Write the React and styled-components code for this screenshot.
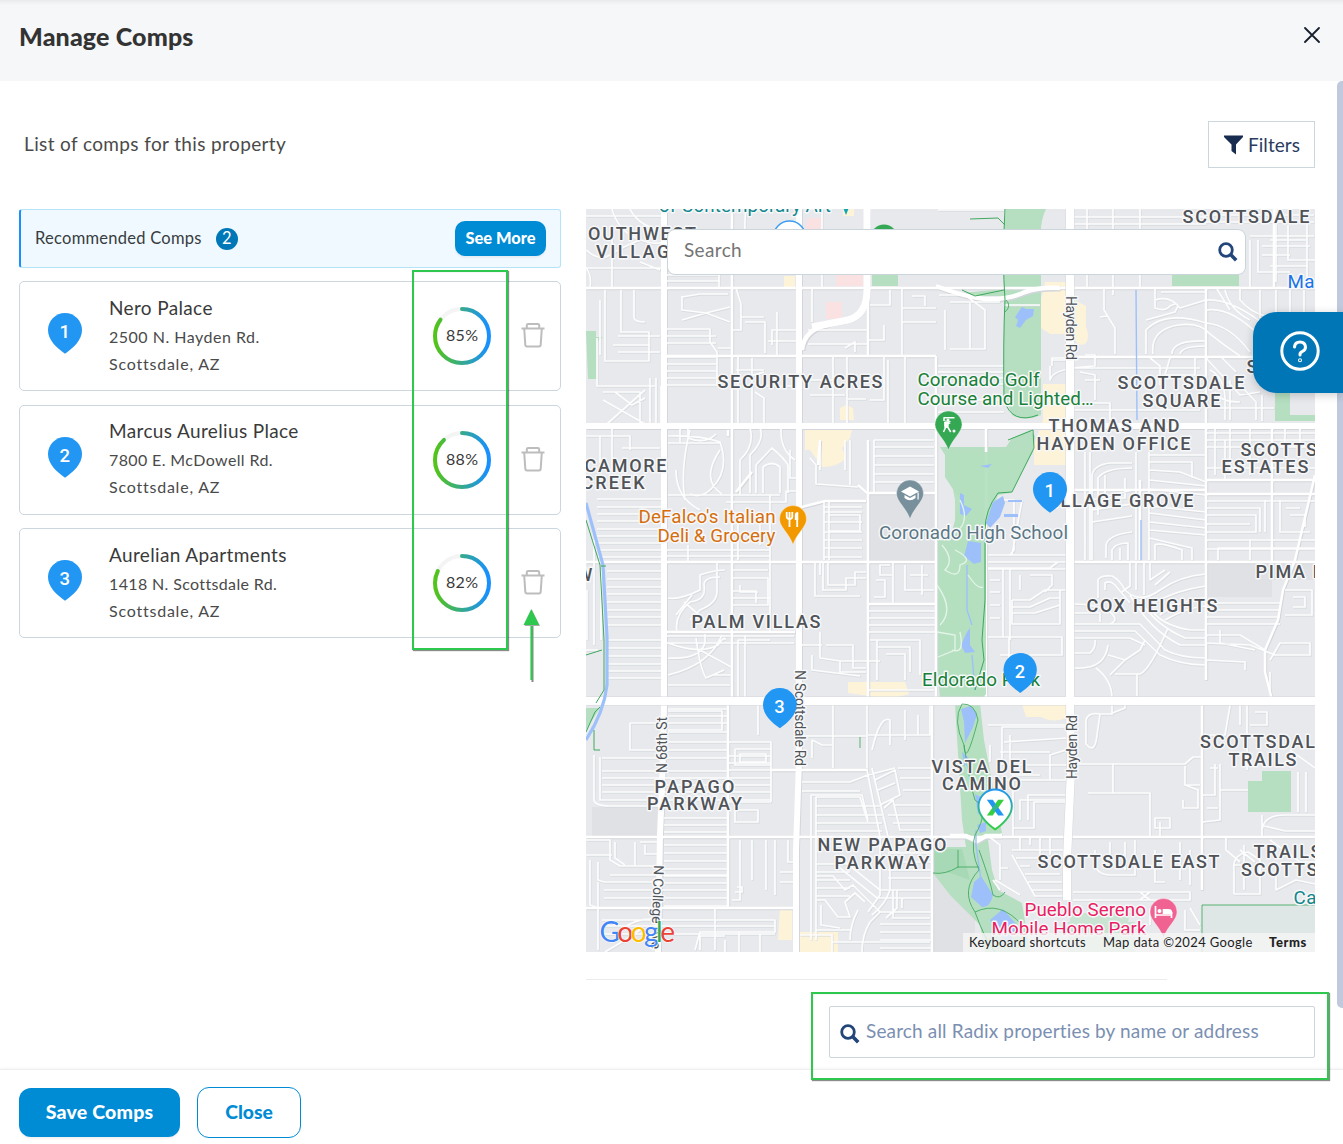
import React from "react";
import styled, { createGlobalStyle } from "styled-components";

const GlobalStyle = createGlobalStyle`
  * { box-sizing: border-box; }
  body { margin: 0; background: #fff; font-family: Lato, "Open Sans", sans-serif; color: #333; }
  button, input { font-family: inherit; }
  svg { display: block; flex: none; }
`;

const Page = styled.div`
  position: relative;
  display: flex;
  flex-direction: column;
  width: 1343px;
  height: 1144px;
  overflow: hidden;
`;
const Header = styled.header`
  display: flex;
  justify-content: space-between;
  height: 81px;
  padding: 22px 23px 0 19px;
  background: linear-gradient(#e8eaec, #f5f7f9 5px);
`;
const Title = styled.h1`
  margin: 0;
  font-size: 25px;
  line-height: 29px;
  font-weight: 900;
  letter-spacing: 0.15px;
  color: #333;
`;
const Body = styled.main`
  height: 988px;
  padding: 40px 28px 0 19px;
`;
const Toolbar = styled.div`
  display: flex;
  justify-content: space-between;
  height: 47px;
  padding-left: 5px;
`;
const Intro = styled.p`
  margin: 0;
  font-size: 19px;
  line-height: 45px;
  color: #4a4a4a;
  letter-spacing: 0.37px;
`;
const FilterButton = styled.button`
  display: flex;
  align-items: center;
  gap: 5px;
  width: 107px;
  height: 47px;
  padding: 0 0 0 15px;
  border: 1px solid #ccd6dd;
  background: #fff;
  color: #2b3c61;
  font-size: 19px;
  letter-spacing: 0.05px;
  white-space: nowrap;
`;
const Columns = styled.div`
  display: flex;
  gap: 25px;
  margin-top: 41px;
`;
const CompList = styled.section`
  display: flex;
  flex-direction: column;
  width: 542px;
`;
const Banner = styled.div`
  display: flex;
  align-items: center;
  height: 59px;
  margin-bottom: 13px;
  padding: 0 14px 0 14px;
  border: 1px solid #b5e3f8;
  border-left: 2px solid #1890ff;
  border-radius: 3px;
  background: #f0f9ff;
  color: #383d40;
  font-size: 16.5px;
  letter-spacing: 0.26px;
`;
const BannerText = styled.span`
  padding-bottom: 2px;
`;
const Count = styled.span`
  width: 22px;
  height: 22px;
  margin: 0 auto 0 14px;
  border-radius: 50%;
  background: #0077b6;
  color: #fff;
  font-size: 16.5px;
  line-height: 21px;
  text-align: center;
  letter-spacing: 0;
`;
const Action = styled.button`
  width: ${(p) => p.$w}px;
  height: ${(p) => p.$h}px;
  padding: 0 0 3px;
  border: ${(p) => (p.$ghost ? "1px solid #008bd5" : "0")};
  border-radius: ${(p) => p.$r || 12}px;
  background: ${(p) => (p.$ghost ? "#fff" : "#008bd5")};
  color: ${(p) => (p.$ghost ? "#008bd5" : "#fff")};
  box-shadow: ${(p) => (p.$ghost ? "none" : "0 2px 2px rgba(0,0,0,.05)")};
  font-size: ${(p) => p.$fs}px;
  font-weight: 900;
  letter-spacing: ${(p) => p.$ls || 0}px;
`;
const Card = styled.article`
  display: flex;
  align-items: center;
  height: 110px;
  margin-bottom: 13.6px;
  padding-left: 27.5px;
  border: 1px solid #ccd6de;
  border-radius: 5px;
`;
const PinSlot = styled.div`
  width: 61.5px;
  margin-top: -5px;
`;
const Details = styled.div`
  width: 324px;
  padding-bottom: 3px;
`;
const Name = styled.div`
  font-size: 19px;
  line-height: 30px;
  color: #3a3a3a;
  letter-spacing: 0.36px;
`;
const Address = styled.div`
  font-size: 16px;
  line-height: 27px;
  color: #4a4a4a;
  letter-spacing: ${(p) => p.$ls}px;
`;
const TrashSlot = styled.div`
  margin: -2px 0 0 29.5px;
`;
const MapColumn = styled.section`
  width: 729px;
`;
const MapFrame = styled.div`
  position: relative;
  height: 743px;
  overflow: hidden;
`;
const MapSearch = styled.div`
  position: absolute;
  top: 20px;
  left: 81px;
  display: flex;
  align-items: center;
  justify-content: space-between;
  width: 579px;
  height: 46px;
  padding: 0 7px 1px 16px;
  border: 1px solid #cbd5dc;
  border-radius: 8px;
  background: #fff;
  color: #757575;
  font-size: 19px;
  line-height: 44px;
  letter-spacing: 0.35px;
`;
const Attribution = styled.div`
  position: absolute;
  right: 0;
  bottom: 0;
  display: flex;
  align-items: center;
  width: 352px;
  height: 19px;
  padding: 0 0 2px 6px;
  background: rgba(245, 245, 245, 0.82);
  color: #222;
  font-size: 13px;
  white-space: nowrap;
`;
const Credit = styled.span`
  width: ${(p) => p.$w}px;
  letter-spacing: ${(p) => p.$ls}px;
  font-weight: ${(p) => (p.$bold ? 900 : 400)};
`;
const Rule = styled.div`
  width: 581px;
  height: 1px;
  margin-top: 27px;
  background: #ececec;
`;
const PropertySearch = styled.div`
  display: flex;
  align-items: center;
  gap: 6px;
  width: 486px;
  height: 52px;
  margin: 26px 0 0 auto;
  padding: 0 0 0 10px;
  border: 1px solid #cbd5dc;
  border-radius: 2px;
  color: #7b8fb2;
  font-size: 19px;
  letter-spacing: 0.15px;
  white-space: nowrap;
`;
const Placeholder = styled.span`
  padding-bottom: 3px;
`;
const IconDrop = styled.span`
  padding-top: 4px;
`;
const Footer = styled.footer`
  display: flex;
  align-items: center;
  gap: 17px;
  height: 75px;
  padding: 11px 0 0 19px;
  background: #fff;
  border-top: 1px solid #eee;
  box-shadow: 0 -1px 3px rgba(0, 0, 0, 0.04);
`;
const ScrollThumb = styled.div`
  position: absolute;
  right: 0;
  top: 81px;
  width: 6px;
  height: 927px;
  border-radius: 5px 0 0 5px;
  background: #c0c9dd;
`;
const HelpTab = styled.button`
  position: absolute;
  right: 0;
  top: 312px;
  width: 90px;
  height: 81px;
  padding: 0 0 3px 26.5px;
  border: 0;
  border-radius: 24px 0 0 24px;
  background: #0076b6;
  box-shadow: 0 2px 10px rgba(0, 0, 0, 0.2);
`;
const Highlight = styled.div`
  position: absolute;
  left: ${(p) => p.$x}px;
  top: ${(p) => p.$y}px;
  width: ${(p) => p.$w}px;
  height: ${(p) => p.$h}px;
  border: 2px solid #2dc84d;
  box-shadow: 1px 1px 1px rgba(0, 0, 0, 0.45), inset 1px 1px 0 rgba(0, 0, 0, 0.03);
`;
const Pointer = styled.svg`
  position: absolute;
  left: 520px;
  top: 607px;
`;

const PIN = "M17 0C26.4 0 34 7.6 34 17C34 27.5 25 35 17 40.7C9 35 0 27.5 0 17C0 7.6 7.6 0 17 0Z";

const PinShape = ({ n, x = 0, y = 0, scale = 1 }) => (
  <g transform={`translate(${x} ${y}) scale(${scale})`}>
    <path d={PIN} fill="#2196f3" />
    <text x="16.7" y="25.2" textAnchor="middle" fontFamily="Roboto, sans-serif" fontWeight="500" fontSize="18.5" fill="#fff">{n}</text>
  </g>
);

const ring = 2 * Math.PI * 27;
const Score = ({ value }) => (
  <svg width="58" height="58" viewBox="0 0 58 58">
    <defs>
      <linearGradient id={`score${value}`} gradientUnits="userSpaceOnUse" x1="0" y1="0" x2="0" y2="58">
        <stop offset="0.05" stopColor="#52c41a" />
        <stop offset="0.95" stopColor="#1890ff" />
      </linearGradient>
    </defs>
    <circle cx="29" cy="29" r="27" fill="none" stroke="#f4f4f4" strokeWidth="4" />
    <circle cx="29" cy="29" r="27" fill="none" stroke={`url(#score${value})`} strokeWidth="4" strokeLinecap="round"
      strokeDasharray={`${(ring * value) / 100} ${ring}`} transform="rotate(-90 29 29)" />
    <text x="29" y="34" textAnchor="middle" fontFamily="Lato, sans-serif" fontSize="16" fill="#3a3a3a" textLength="32">{value}%</text>
  </svg>
);

const Trash = () => (
  <svg width="24" height="26" viewBox="0 0 24 26" fill="none" stroke="#bdbdbd" strokeWidth="2" strokeLinejoin="round">
    <path d="M.5 6.5H23.5M5.8 6V3.3Q5.8 2 7.2 2H16.8Q18.2 2 18.2 3.3V6M3.2 6.5L4.3 22.6Q4.4 24.4 6 24.4H18Q19.6 24.4 19.7 22.6L20.8 6.5" />
  </svg>
);

const SearchIcon = () => (
  <svg width="20" height="20" viewBox="0 0 20 20" fill="none" stroke="#22457a">
    <circle cx="8" cy="8" r="6.3" strokeWidth="2.8" />
    <path d="M12.6 12.6L18.2 18.2" strokeWidth="3.6" />
  </svg>
);

const h = (a, b, ...ys) => ys.map((y) => `M${a} ${y}H${b}`).join("");
const v = (a, b, ...xs) => xs.map((x) => `M${x} ${a}V${b}`).join("");

const minor =
  h(586, 664, 216, 268) + "M586 250Q600 262 610 255T640 240M612 209Q618 230 636 238T664 242M630 209Q640 228 664 230M586 268Q592 275 590 288M612 232V288M640 262L660 270" +
  h(666, 720, 275, 281) + "M719 275V288M732 209V288M746 209Q742 240 752 270" +
  "M605 290V361H649V332H621V290M613 345H650M600 300V355M634 290V318Q635 322 645 322M597 338V386H655M618 336H660M618 352H660M650 378V424M656 378V424M661 386V424" +
  "M603 400L645 424M645 390L607 424M603 392H640V424M615 392L632 405L645 398" +
  h(666, 716, 336, 343, 357, 364, 371, 378, 385) + "M666 329H710V342L717 352V386M718 348H731M682 296V310L706 313L730 307M682 320L706 313L730 322M682 297L700 294H728" +
  "M736 288L741 304V330H732M741 317H764M736 370H764M736 380L764 372M745 322H765V353M738 356V425M752 358V425M766 386H799M777 312V356M768 341H796M772 345V330H796M755 392L764 398V425" +
  h(808, 868, 330, 344) + "M833 356V426M847 356V426M812 288V322M822 209V288M890 290V305H870M902 288V356M884 325V340H869M845 348L855 342V352M902 308H936M902 322H936M912 296H925V306M884 356V400H870M810 380H832M810 395H845M848 399H866M888 360V425M905 356V425" +
  h(938, 1004, 210, 366, 372, 378, 384, 400, 412) + "M939 295H965L985 310V349H950M945 310V350M970 303V349M950 302H1000M1004 305H1040" +
  h(1052, 1068, 360) + "M1052 366V358H1070M1050 366V380Q1052 368 1095 366V355H1085" +
  h(1074, 1206, 217, 224, 230) + v(209, 288, 1087, 1113, 1140) +
  h(1206, 1314, 215, 222) + "M1250 240V288M1258 240V272H1290M1250 236H1314M1262 255H1290M1276 209V282M1307 220V282M1262 246H1310M1288 225V260H1315M1270 240H1306M1270 266H1308" +
  "M1104 288V310L1115 328V354M1108 316L1100 317M1113 290V295M1155 288V308Q1165 312 1170 306Q1182 300 1175 312L1146 320M1155 300Q1170 295 1180 308L1206 300M1161 292H1170Q1190 292 1206 292M1146 354V330Q1165 310 1206 323Q1230 325 1250 352M1153 354Q1150 330 1178 325Q1200 322 1210 334Q1225 346 1240 356M1172 354Q1172 340 1206 341M1180 354Q1182 346 1206 346M1206 310Q1230 306 1260 336M1206 300Q1230 298 1265 325M1225 290Q1230 310 1250 320M1240 289V300Q1250 312 1265 316M1217 289L1230 310M1260 290V318M1276 290V360M1290 290V312M1304 290V312M1206 358L1240 395L1260 392M1220 356L1236 372M1210 370Q1225 378 1225 400V420M1215 392Q1220 402 1240 402M1150 358L1160 366V385M1170 358L1165 375H1195V357" +
  h(1074, 1200, 357, 368, 410) + "M1080 372L1095 375V400M1085 380H1100M1075 403H1110V420M1218 408H1274M1230 380V420M1240 385L1256 402V420M1262 395V421" +
  v(428, 475, 1215, 1230, 1250) + h(1206, 1315, 433, 440, 447, 468) + "M1285 428V455M1300 428V455M1225 480V440H1206" +
  "M586 436H630V450M600 436V463M612 428V470M622 448H660M668 436Q700 435 720 442Q730 470 712 488Q702 499 690 494M668 443H720M680 428V443M690 430Q680 470 685 500M676 470Q676 498 700 510M720 450Q700 480 722 494M750 428Q755 446 740 460V495M760 428Q765 440 750 455V493M756 493V465L772 448Q784 458 788 465V493M763 493V467Q772 460 780 467V493M781 428Q780 450 795 460M688 428V438Q705 445 716 434M800 478H790V450M810 458L816 465V484L858 487M820 470V440M845 440V470M850 485V440M874 440H934M874 440V492" +
  h(874, 934, 447, 456, 465, 474, 482) + h(668, 780, 495) + "M726 502H786V491H798" +
  h(597, 662, 499, 507, 514, 521, 529, 536, 543, 550, 557) +
  h(666, 770, 550, 556) + "M688 545V561M732 504V560M738 512V560M760 512V545M770 495V562" +
  h(824, 862, 507, 512, 522, 532, 540, 548, 557) + v(501, 560, 824, 829) + "M829 522V515H860V531H829" +
  h(607, 662, 571, 579, 587, 594, 602, 610, 617, 625, 640, 648, 656, 664, 671, 678) +
  "M587 590V640M594 540V645M586 650H598M601 570V640M668 598Q680 600 700 590V575Q715 570 725 570M677 632Q674 615 690 602Q707 600 704 585Q704 577 720 577M684 602L705 620M692 595L676 615M717 563V590Q718 603 700 610L690 620M732 563V632M732 570H768M732 578H768V605H732M732 591H756V603M732 598H770M770 563V632M740 585V592H758" +
  "M823 563V590H846V578H866M828 563V585H855V572H866M815 563V596H860M820 563V575" +
  "M876 580H885V597H874M893 563V604H868M905 565V590H934M922 565V595M890 565H880V575H892M910 575H928" +
  h(868, 935, 604, 611, 618, 625, 632) + h(666, 794, 636, 643) +
  "M668 643Q700 655 718 645Q725 635 725 640M668 658Q700 660 705 643V634M668 675Q710 665 722 635M696 638Q700 668 706 678L724 670M700 650L731 667M668 685H730M712 675H731M738 640H770M738 640V700M745 635V700" +
  "M820 632V658L840 661V672H866M826 645H853V668H866M840 661H880M802 645H822M812 655V670L860 676M870 640H920V675M878 647H910V672M886 654H905V680M877 640V680M868 690H934" +
  h(988, 1068, 555, 562, 569) + "M988 555H1010L1014 550V500H1000M1022 500L1012 555M988 568H1050L1058 562H1068M1010 568V640M1003 568V637M1012 600H1030L1045 590H1068M1012 607H1030L1050 598H1060M1012 613H1035L1060 605V624H1012V600M1030 575H1052V585L1045 592M1020 590V575M1060 590V624M988 637H1062V655H1000M1009 637V660M990 580H1000M990 592H1000M990 605H1000M990 618H1000" +
  v(452, 560, 1085, 1090, 1136, 1149) + "M1092 560V475Q1094 465 1110 463H1132M1098 515V478Q1105 468 1132 468M1105 475V498H1125V478M1092 500L1132 490M1092 522L1132 516M1092 510L1132 504M1106 558V545Q1108 535 1132 532M1112 560V550Q1115 543 1128 543V560M1120 560V548M1149 462H1192V478M1149 470L1180 472L1206 482M1149 480L1206 486M1149 489L1206 495M1149 506L1206 512M1149 513L1206 520M1149 522L1206 528M1149 530L1206 535M1149 538L1192 548V560M1155 560V545Q1160 542 1182 550V560M1149 455H1206" +
  h(1206, 1315, 480, 494, 501, 540, 549) + "M1206 508H1260V532M1206 515H1256V532H1206M1265 500V532M1280 500V532H1310M1286 508H1300M1290 515H1305V527M1218 560V548H1315M1206 524H1250" +
  h(1206, 1280, 603, 610, 617, 624) + "M1285 590H1312V615H1285M1293 597H1305V607H1293M1206 643L1250 645L1275 655H1310V643H1280L1270 660M1206 635H1240L1265 650M1206 660L1245 662V670M1220 630V643L1255 650M1270 672V693M1250 560V540" +
  "M1098 598V580Q1100 575 1112 576Q1120 580 1125 590Q1140 605 1160 590Q1180 576 1206 574M1105 590V583Q1110 580 1115 585L1130 603M1130 563V586L1122 592M1144 563V595M1136 563V590M1150 563V580L1165 570M1155 585L1170 572M1074 604Q1095 604 1110 612Q1120 620 1110 624M1074 613H1100V622M1130 595Q1150 630 1180 645H1206M1140 600Q1155 625 1185 638H1206M1150 608Q1160 625 1190 630H1206M1160 615Q1180 600 1206 598M1150 605Q1175 590 1206 586M1165 620Q1185 608 1206 606M1074 624H1140L1165 650Q1180 658 1206 658M1074 631H1135L1160 655Q1180 665 1206 665M1074 638H1130L1145 645M1074 653H1090Q1096 648 1095 640M1074 668Q1105 670 1108 645M1096 668Q1112 680 1112 698M1108 655L1125 660L1140 650L1145 640M1110 675L1125 660M1115 674H1140Q1150 670 1168 628M1137 674V696" +
  h(668, 728, 709, 716, 723, 732, 742, 750, 758) + "M668 730H722V711H668M630 723H661M630 723V750H661M735 749H771V765H735V749M740 754H766V762H740Z" +
  h(602, 728, 758, 771, 778, 785, 792, 800) + "M600 757V800H770M594 755V800Q595 806 610 806H660" +
  h(728, 771, 742, 756, 763, 770, 778, 785, 792, 802) + "M728 742H771V802M812 758V740L822 745H832M833 704V768M867 704V768M770 770H800M758 704V735" +
  h(802, 866, 736) + "M868 735H930V704M872 750Q880 715 890 720V745M905 710V740M918 715V735" +
  "M802 782H850L868 775L895 768M802 791H860M811 940V795H862L868 820M816 940V797H860L868 822M867 770L880 836M872 768L888 836M875 780L895 770L900 795L880 805M878 790L895 783M898 768H932M900 778H932M903 790H932M884 808L893 800L900 830H930M895 805H932M888 815H932M893 823H932" +
  h(816, 882, 806, 815, 823, 831) +
  h(664, 728, 818, 825, 832, 845, 853, 861, 869, 876, 883, 890, 898, 906) +
  "M586 840H610V860L620 866H662M598 862V880L604 882H662M615 842V858L625 865M635 842V866M645 845V854H660M640 842H660M598 882V950M586 855H612M590 860V905L598 908H728M604 890H728M604 898H728M610 875H728" +
  "M735 822H758V810H735ZM740 840V900H732M752 840V880M766 840V890M775 840V895M735 892H742V887H737M788 840V862H796M780 872H796M780 882H796" +
  h(602, 775, 920, 926, 934) + "M620 930Q640 915 665 920H775V932H700L695 950M715 908V950M725 940V952M739 932V952M700 950V936H725M640 930L625 940L605 952M760 934V952" +
  h(816, 850, 864, 872, 880, 888, 896) + "M816 876H833L845 890L853 885L880 912L870 922Q862 935 862 952M835 864L877 898H880M845 862L880 890M816 900H825L838 917H850L845 902L855 893L865 902M858 910Q850 925 850 940M816 930H850M821 905V925L840 928M880 836V895L868 912M872 915Q885 905 890 890V862M886 918L897 908V890H930" +
  h(888, 932, 853, 862, 870, 878) + h(880, 932, 890, 898, 912, 924, 932, 940, 948) + "M893 890V918H930M902 898V908M832 952V942H930M800 935H832V952" +
  h(988, 1068, 725) + "M1002 765V727H1068M1010 735V765H1068M1004 742L1068 738M1000 752H1050M990 762V745M1013 837V765M1020 820V800H1068M1028 820V795H1068M1013 828H1034V802H1066M1050 780V755L1066 750M1013 775H1040M1004 780H1066" +
  "M988 836L1000 845V880M1012 850H1066M1012 855L1035 896H1066M1016 858H1064M1020 866H1030M1025 874H1060M1028 882H1062M1032 890H1064M1020 838V850M1030 838V845M1040 838V855M1050 838V855M1000 868H1008M995 880L1020 895M993 880L1000 890" +
  "M1076 764H1185L1193 757H1202M1086 720Q1088 712 1100 714H1110L1125 708V704M1086 720V744Q1095 755 1097 735L1100 714M1113 764V793M1088 793H1150V837M1112 704V715M1155 818H1170V828H1155ZM1160 822V836M1185 766V785H1200M1185 785L1198 790V808H1183V800" +
  "M1215 764V795H1203M1220 764V820L1203 822M1210 768H1218M1207 808H1218M1231 700L1225 735H1210M1247 704V770M1220 790H1248M1255 712H1267V725H1250M1226 837V850L1240 862M1240 850L1255 862M1234 894V870Q1232 855 1248 852L1260 860V894H1234M1244 845V890M1252 865H1234M1298 772V812M1306 772V812M1262 836Q1260 815 1285 815H1315M1264 826L1285 831H1315M1240 704V725M1290 750L1315 768M1270 840L1300 862H1315M1276 870V890L1296 880L1315 884M1262 815V837" +
  "M1095 850V860Q1095 875 1110 875H1135V840M1110 842V860M1125 842V870M1155 850V882H1165M1180 842V880M1190 850V885M1073 892H1190V900H1073M1140 892L1150 900M1150 892L1140 900M1150 908V925M1190 908L1200 925M1185 910V930H1200";

const medium =
  v(209, 700, 732) + v(700, 908, 728) + v(209, 356, 868) + v(440, 700, 868) + v(356, 704, 936) + v(704, 952, 932) + v(288, 680, 1206) + v(700, 890, 1202) + v(428, 563, 1272) + v(209, 288, 1274) +
  h(586, 1315, 288) + h(666, 936, 356) + h(1072, 1315, 357) + h(586, 936, 562) + h(1072, 1315, 562) + h(666, 795, 632) + h(868, 936, 604) + h(586, 1315, 837) +
  h(1206, 1315, 480) + h(1206, 1315, 494) + h(1074, 1206, 490) +
  "M1315 475L1295 560L1283 590L1278 620L1265 650V672L1272 700M736 492L752 472M858 485L867 493H936M798 508L825 501H866M820 440L818 465M586 908H795M770 770H868M728 430V436M986 428V700M1140 480V560";

const major = "M664 209V705Q663 770 660 835L658 952M799 209V560L799 640V760L796 850V952M586 426H1315";
const mega = "M1070 209V700L1071 770L1067 860V900M586 701H1315";
const bend = "M867 209V290Q867 315 848 320L812 327";
const sweep = "M802 350Q804 329 830 324M936 286Q965 297 985 299Q1008 300 1025 292Q1040 287 1060 288M950 836H966L977 841L986 836H1002";

const Label = ({ x, y, w, children, fill = "#505358", poi, size = 18, rotate }) => (
  <text x={rotate ? undefined : x} y={rotate ? undefined : y} fontFamily="Roboto, sans-serif" fontSize={size} fontWeight={poi ? 400 : 500}
    fill={fill} stroke="#f7f8f9" strokeWidth="3" strokeLinejoin="round" paintOrder="stroke" textLength={w} lengthAdjust="spacing"
    transform={rotate ? `translate(${x} ${y}) rotate(${rotate})` : undefined}>{children}</text>
);

const areas = [
  ["OUTHWEST", 588, 240, 108], ["VILLAGE", 596, 257.5, 86], ["SECURITY ACRES", 717.5, 388, 165], ["SCOTTSDALE", 1182.5, 222.6, 127],
  ["SCOTTSDALE", 1117.5, 389, 127], ["SQUARE", 1142.5, 406.6, 78], ["S", 1246.5, 373], ["THOMAS AND", 1048.5, 432, 131], ["HAYDEN OFFICE", 1036.5, 449.6, 154],
  ["SCOTTSDALE", 1240.5, 456, 127], ["ESTATES", 1221.5, 473.3, 87], ["CAMORE", 584.5, 471.6, 82], ["CREEK", 581.5, 489, 63], ["VILLAGE GROVE", 1040.5, 506.6, 153],
  ["PIMA PARK", 1255.5, 578, 107], ["W", 576.5, 581], ["COX HEIGHTS", 1086.5, 612, 131], ["PALM VILLAS", 691.5, 627.6, 129], ["PAPAGO", 654.5, 793, 80],
  ["PARKWAY", 647, 810.3, 95], ["VISTA DEL", 931.5, 772.6, 100], ["CAMINO", 942, 790, 79], ["SCOTTSDALE", 1200, 748, 127], ["TRAILS", 1228.5, 766, 68],
  ["NEW PAPAGO", 817.5, 851.3, 129], ["PARKWAY", 834.5, 868.8, 95], ["SCOTTSDALE EAST", 1037.5, 868, 182], ["TRAILS", 1253.5, 858, 68], ["SCOTTSDALE", 1241, 876, 127],
];
const G = "#188038", T = "#12878d", P = "#e91e63", O = "#d56e0c", B = "#5b7785";
const places = [
  ["of Contemporary Art", 659, 211.5, 172, T], ["Coronado Golf", 917.5, 386, 122, G], ["Course and Lighted…", 917.5, 405, 176, G], ["Ma", 1287.5, 288, 27, "#1a73e8"],
  ["DeFalco's Italian", 638.5, 523, 137, O], ["Deli & Grocery", 657.5, 541.6, 118, O], ["Coronado High School", 879, 539, 189, B],
  ["Eldorado Park", 922, 686, 118, G], ["Pueblo Sereno", 1024.5, 916, 121.5, P], ["Mobile Home Park", 991.5, 934.6, 155, P], ["Ca", 1293.5, 903.6, 23, T],
];

const Poi = ({ x, y, fill, children }) => (
  <g transform={`translate(${x} ${y})`}>
    <path d="M0 -13.5A13.5 13.5 0 0 1 13.5 0C13.5 8 4 14 0 25.5C-4 14 -13.5 8 -13.5 0A13.5 13.5 0 0 1 0 -13.5Z" fill={fill} stroke="#fff" strokeOpacity=".45" strokeWidth=".8" />
    {children}
  </g>
);

const CityMap = () => (
  <svg width="729" height="743" viewBox="586 209 729 743">
    <defs>
      <linearGradient id="home" x1="0" y1="0" x2="0" y2="1">
        <stop offset="0" stopColor="#2196f3" /><stop offset="1" stopColor="#36cf42" />
      </linearGradient>
    </defs>
    <rect x="586" y="209" width="729" height="743" fill="#e8e9ed" />
    <g fill="#e0e1e5">
      <path d="M868 494H936V562H868ZM1206 564H1272V597H1206ZM1272 564H1315V580H1272ZM592 807H658V838H592ZM933 875H950L975 905V952H933Z" />
    </g>
    <g fill="#b5dfc0">
      <path d="M1006 209H1046Q1040 222 1041 235V415Q1025 422 1012 415L1004 395V230Z" />
      <path d="M940 447H1006L1012 438L1030 430L1035 436L1033 450L1012 492L998 494L986 525V700H940L937 657V540H950L960 500L945 477V455Z" />
      <path d="M955 704H980L984 740L1002 833L988 840L992 870L998 890L1022 903L1030 952H985L980 925L950 895L933 873V847H966L962 820Z" />
      <path d="M586 331H596V337H603L597 342V379H588ZM872 275H898V286H872ZM1172 275H1239V286H1172ZM1275 392H1290V415H1315V421H1275ZM1262 771H1291V812H1248V781H1262ZM586 708H600L586 730ZM962 293L1004 289V296H975Z" />
      <path d="M1070 913H1130L1128 922H1070ZM1068 922H1135V952H1068Z" opacity=".6" />
      <path d="M1202 905H1315V952H1202Z" opacity=".16" />
    </g>
    <path d="M933 849H962L970 880L950 873H934Z" fill="#a8d9b6" />
    <g fill="#fdf3d8">
      <path d="M805 430H852L850 438L842 448L846 458Q838 467 822 467L810 450H805ZM840 408L846 405L853 408L854 420H840ZM784 276H795V288H784ZM843 209H854V216H843ZM1041 300L1045 282H1068V334H1050L1041 328ZM1074 300L1086 306V326Q1092 345 1080 345L1074 340ZM1043 384H1067V465H1034V445L1043 420ZM848 682L905 682L909 694L890 699L848 693ZM1022 704H1067V717Q1055 724 1041 717H1026ZM780 907H792V940H778ZM798 932H838V952H798ZM1038 703H1066V710H1038Z" />
    </g>
    <path d="M836 275H863V286H836ZM826 302H842V319H826ZM808 218H824L820 230H805Z" fill="#fae2e3" />
    <g fill="none" stroke="#d3d5da" transform="translate(.7 .8)">
      <path d={minor} strokeWidth="1.9" opacity=".7" />
      <path d={medium} strokeWidth="3" />
      <path d={sweep + bend} strokeWidth="5.5" />
      <path d={major} strokeWidth="6.5" />
    </g>
    <path d={minor} fill="none" stroke="#fdfdfd" strokeWidth="1.7" strokeLinejoin="round" />
    <path d={medium} fill="none" stroke="#fff" strokeWidth="2.5" />
    <path d={sweep} fill="none" stroke="#fff" strokeWidth="4.5" />
    <path d={bend} fill="none" stroke="#fff" strokeWidth="7" />
    <path d={major} fill="none" stroke="#fff" strokeWidth="6" />
    <path d={mega} fill="none" stroke="#d5d7dc" strokeWidth="9" />
    <path d={mega} fill="none" stroke="#fff" strokeWidth="8" />
    <g fill="#b5dfc0"><path d="M946 452H1033L1010 493L998 495L986 526V695H955L940 690V563H955V500ZM956 706H980L984 760L1000 828H968Z" opacity=".95" /></g>
    <path d="M586 503L603 565L607 637V685Q604 712 586 740" fill="none" stroke="#9dc0fa" strokeWidth="3.2" />
    <path d="M1136 290L1137 420M1141 520V560M967 565V610L972 625M972 655L975 690M976 830V845L981 880" fill="none" stroke="#9dc0fa" strokeWidth="1.4" />
    <g fill="#9dc0fa">
      <path d="M1015 317L1022 307L1026 309L1034 309L1033 316L1026 320L1020 328L1016 326L1018 320ZM960 493L964 495L964 505L972 509L966 516L960 514ZM993 502L1003 496L1005 503L1000 517L990 528L986 523ZM968 541L981 543V562L974 564L964 556ZM967 632L970 628V645L975 652L965 653L961 645ZM980 466L992 464L988 468ZM1008 500H1022V502H1008ZM1004 514H1018V517H1004Z" />
      <path d="M961 709L971 706L977 714L973 727L965 743L964 722ZM962 752L969 758L964 767ZM975 794L985 799L978 815ZM977 825L986 822L986 831L980 833ZM981 876L993 895Q990 908 982 907L971 897L974 882ZM990 920L1003 909L1017 925L1010 945L1000 935Z" />
    </g>
    <g fill="none" stroke="#e4f4e8" strokeWidth="1.3">
      <path d="M942 545Q955 560 945 570Q960 580 960 565Q975 560 955 550M960 500Q975 530 940 540M937 585Q955 610 940 625M937 632L955 635V650L938 657M952 650Q965 655 960 632M968 575Q978 590 983 587" />
    </g>
    <g fill="none" stroke="#3fa85d" strokeWidth="1">
      <path d="M586 520L600 565L604 640V690L596 703M586 655L602 650M586 732L595 712L600 707M594 730V750H600M601 566H606M970 219L998 218L1005 225M962 290L975 296L1004 290M1005 209Q1002 260 1005 300Q1003 340 1004 400Q1012 425 1038 415M1008 440L1033 430L1034 448L1012 492L998 493Q985 510 985 530V600L982 640L984 660L975 690" />
      <path d="M1006 300Q1012 306 1005 312M860 737V748M962 704Q952 720 964 745Q965 770 978 720Q975 703 962 704M964 745Q970 785 975 800Q990 810 975 835Q970 850 979 870Q960 890 975 912Q985 940 995 952M979 850Q990 880 993 895Q1000 900 1005 892M975 912Q1000 900 1022 925M933 873Q945 875 958 867H979M958 850V868M1202 952V905H1315" opacity=".85" />
    </g>
    {areas.map(([t, x, y, w], i) => <Label key={i} x={x} y={y} w={w}>{t}</Label>)}
    {places.map(([t, x, y, w, c]) => <Label key={t} x={x} y={y} w={w} fill={c} poi size={18.8}>{t}</Label>)}
    <Label x={1065.5} y={296} w={64} rotate={90} size={14} poi>Hayden Rd</Label>
    <Label x={1077} y={779} w={64} rotate={-90} size={14} poi>Hayden Rd</Label>
    <Label x={794.5} y={670} w={96} rotate={90} size={14} poi>N Scottsdale Rd</Label>
    <Label x={666.5} y={773} w={56} rotate={-90} size={14} poi>N 68th St</Label>
    <Label x={654} y={865} w={84} rotate={92} size={14} poi>N College Ave</Label>

    <path d="M842 205H850L846 215Z" fill="#12a4b0" />
    <circle cx="789.5" cy="237" r="16" fill="#fff" stroke="#3b9cf0" strokeWidth="1.5" />
    <circle cx="884" cy="238" r="13.5" fill="#34a853" />
    <Poi x={948.5} y={424.5} fill="#34a853">
      <g fill="none" stroke="#fff" strokeWidth="1.5" strokeLinejoin="round"><path d="M6 -6.8H-4.5V-3.5M1.8 -1.5L-3 -1M-3.5 0L-3 3L-5 7.5M-.5 3L2.2 7.5" /><path d="M-4 -3.5L2 -3" strokeWidth="1.2" /></g>
      <path d="M-4.5 -2.5H.5L0 3.5H-4Z" fill="#fff" /><circle cx="-.5" cy="-4.5" r="1.5" fill="#fff" /><circle cx="5.5" cy="6.5" r="1.5" fill="#fff" />
    </Poi>
    <Poi x={910} y={493.5} fill="#78909c">
      <path d="M0 -7L9 -2L0 3L-9 -2ZM-5.5 1.5L0 4.5L5.5 1.5V4.5Q0 9 -5.5 4.5ZM7.5 -1H8.7V6H7.5Z" fill="#fff" />
    </Poi>
    <Poi x={793} y={519} fill="#f29900">
      <path d="M-6.3 -7V-2.5Q-6.3 0 -3.5 0T-.7 -2.5V-7M-3.5 -7V8M4.2 8V-6" fill="none" stroke="#fff" strokeWidth="1.8" />
      <path d="M1.8 1V-4Q2 -7 5.2 -7V1Z" fill="#fff" />
    </Poi>
    <Poi x={1163.5} y={912} fill="#f06292">
      <path d="M-8 -6V6M-8 3H8.5M8 6V0" fill="none" stroke="#fff" strokeWidth="1.7" />
      <circle cx="-4" cy="-1" r="2" fill="#fff" /><path d="M-.8 -3H5Q8.8 -3 8.8 1V2H-.8Z" fill="#fff" />
    </Poi>
    <PinShape n="1" x={1033} y={472} />
    <PinShape n="2" x={1003.5} y={653} scale={0.98} />
    <PinShape n="3" x={763} y={688} scale={0.99} />
    <g transform="translate(978.5 789.5) scale(.98)">
      <path d={PIN} fill="#fff" stroke="url(#home)" strokeWidth="2" />
      <path d="M20 10.5H26L14.5 26.5H8.5Z" fill="#36cf42" /><path d="M8.5 10.5H14.5L26 26.5H20Z" fill="#2196f3" /><path d="M17.3 14.5L20.2 18.5L14 23L14.5 18Z" fill="#2fb98a" />
    </g>
    <text x="599.5" y="941.5" fontFamily="Lato, sans-serif" fontSize="28" fontWeight="400" textLength="75.5" stroke="#fff" strokeWidth="1.2" paintOrder="stroke">
      <tspan fill="#4285f4">G</tspan><tspan fill="#ea4335">o</tspan><tspan fill="#fbbc04">o</tspan><tspan fill="#4285f4">g</tspan><tspan fill="#34a853">l</tspan><tspan fill="#ea4335">e</tspan>
    </text>
  </svg>
);

const comps = [
  { n: 1, name: "Nero Palace", street: "2500 N. Hayden Rd.", ls: 0.5, score: 85 },
  { n: 2, name: "Marcus Aurelius Place", street: "7800 E. McDowell Rd.", ls: 0.38, score: 88 },
  { n: 3, name: "Aurelian Apartments", street: "1418 N. Scottsdale Rd.", ls: 0.36, score: 82 },
];

export default function App() {
  return (
    <>
      <GlobalStyle />
      <Page>
        <Header>
          <Title>Manage Comps</Title>
          <svg width="16" height="26" viewBox="0 0 16 26" stroke="#17202e" strokeWidth="1.8" strokeLinecap="round">
            <path d="M1 6L15 20M15 6L1 20" />
          </svg>
        </Header>
        <Body>
          <Toolbar>
            <Intro>List of comps for this property</Intro>
            <FilterButton>
              <svg width="19" height="20" viewBox="0 0 19 20"><path d="M0 .5H19V2L12 9.5V19.5L7.5 16V9.5L0 2Z" fill="#182c50" /></svg>
              Filters
            </FilterButton>
          </Toolbar>
          <Columns>
            <CompList>
              <Banner>
                <BannerText>Recommended Comps</BannerText>
                <Count>2</Count>
                <Action $w={91} $h={35} $fs={16.4} $r={10}>See More</Action>
              </Banner>
              {comps.map((c) => (
                <Card key={c.n}>
                  <PinSlot><svg width="34" height="41" viewBox="0 0 34 41"><PinShape n={c.n} /></svg></PinSlot>
                  <Details>
                    <Name>{c.name}</Name>
                    <Address $ls={c.ls}>{c.street}</Address>
                    <Address $ls={0.78}>Scottsdale, AZ</Address>
                  </Details>
                  <Score value={c.score} />
                  <TrashSlot><Trash /></TrashSlot>
                </Card>
              ))}
            </CompList>
            <MapColumn>
              <MapFrame>
                <CityMap />
                <MapSearch><Placeholder>Search</Placeholder><SearchIcon /></MapSearch>
                <Attribution>
                  <Credit $w={134} $ls={0.32}>Keyboard shortcuts</Credit>
                  <Credit $w={166} $ls={0.36}>Map data ©2024 Google</Credit>
                  <Credit $bold $ls={0.6}>Terms</Credit>
                </Attribution>
              </MapFrame>
              <Rule />
              <PropertySearch>
                <IconDrop><SearchIcon /></IconDrop>
                <Placeholder>Search all Radix properties by name or address</Placeholder>
              </PropertySearch>
            </MapColumn>
          </Columns>
        </Body>
        <Footer>
          <Action $w={161} $h={49} $fs={19.5} $ls={0.2}>Save Comps</Action>
          <Action $w={104} $h={51} $fs={19.3} $ghost>Close</Action>
        </Footer>
        <ScrollThumb />
        <HelpTab aria-label="Help">
          <svg width="40" height="40" viewBox="0 0 40 40" fill="none" stroke="#fff" strokeWidth="3" strokeLinecap="round">
            <circle cx="20" cy="20" r="18.2" /><path d="M14.5 16Q15 11 20 11T25.5 16Q25.5 19 22.5 20.3T20 24" /><circle cx="20" cy="29.3" r=".5" />
          </svg>
        </HelpTab>
        <Highlight $x={412} $y={270} $w={96} $h={380} />
        <Highlight $x={811} $y={992} $w={518} $h={88} />
        <Pointer width="24" height="76" viewBox="0 0 24 76">
          <path d="M12.5 18V75" stroke="#888" strokeWidth="2" /><path d="M11.5 15V73" stroke="#2dc84d" strokeWidth="2.2" />
          <path d="M4.5 19L12 3L20 19Z" fill="#aaa" /><path d="M3.5 18L11.3 2L19.2 18Z" fill="#2dc84d" />
        </Pointer>
      </Page>
    </>
  );
}
